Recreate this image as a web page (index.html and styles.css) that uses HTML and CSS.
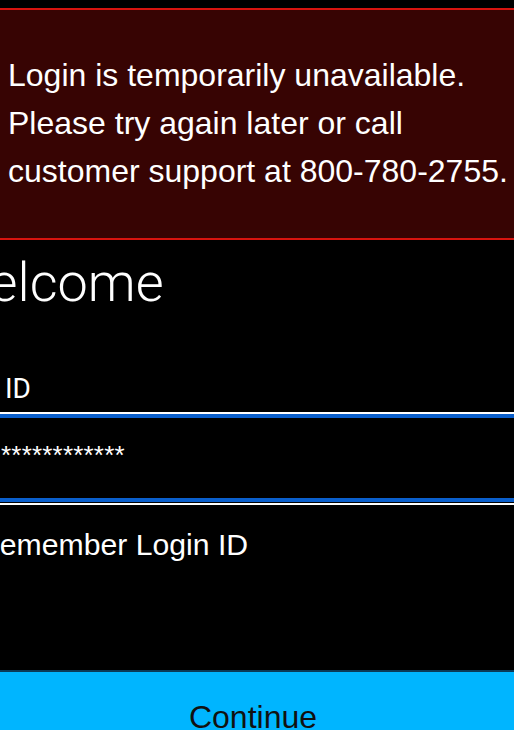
FILE: index.html
```html
<!DOCTYPE html>
<html lang="en">
<head>
<meta charset="utf-8">
<title>Login</title>
<link rel="stylesheet" href="styles.css">
</head>
<body>
<div class="alert">
  <p class="alert-text">Login is temporarily unavailable.<br>Please try again later or call<br>customer support at 800-780-2755.</p>
</div>
<main class="form">
  <h1 class="title">Welcome</h1>
  <div class="field-label">Login ID</div>
  <div class="password-box">
    <div class="password-inner"><span class="password-value">************</span></div>
  </div>
  <div class="remember">Remember Login ID</div>
</main>
<button class="continue" type="button">Continue</button>
</body>
</html>
```

FILE: styles.css
```css
html, body {
  margin: 0;
  padding: 0;
  background: #000;
  overflow: hidden;
  width: 514px;
  height: 730px;
}

body {
  font-family: "Liberation Sans", Arial, sans-serif;
  color: #fff;
}

.alert {
  margin-top: 8px;
  background: #370403;
  border-top: 2px solid #d8140f;
  border-bottom: 2px solid #d8140f;
  padding: 41px 0 43px 8px;
}

.alert-text {
  margin: 0;
  font-size: 32px;
  line-height: 48px;
  white-space: nowrap;
}

.form {
  display: flex;
  flex-direction: column;
}

.title {
  margin: 16px 0 0 -58px;
  font-family: Roboto, "Open Sans", sans-serif;
  font-weight: 300;
  font-size: 54px;
  line-height: 54px;
  white-space: nowrap;
}

.field-label {
  margin: 65px 0 0 -71px;
  font-family: Roboto, "Open Sans", sans-serif;
  font-weight: 400;
  font-size: 28px;
  line-height: 28px;
  height: 37px;
  white-space: nowrap;
}

.password-box {
  border-top: 2px solid #fff;
  border-bottom: 2px solid #fff;
  padding-bottom: 1px;
}

.password-inner {
  border-top: 4px solid #0a5fcc;
  border-bottom: 4px solid #0a5fcc;
  height: 80px;
  display: flex;
  align-items: center;
}

.password-value {
  font-family: "Liberation Sans", Arial, sans-serif;
  font-size: 26px;
  line-height: 30px;
  margin-left: 1px;
  letter-spacing: 0.2px;
  padding-bottom: 6px;
}

.remember {
  box-sizing: border-box;
  height: 165px;
  padding-top: 25px;
  margin-left: -22px;
  font-size: 30.2px;
  line-height: 30px;
  white-space: nowrap;
}

.continue {
  display: block;
  width: 514px;
  margin: 0;
  border: 0;
  border-top: 2px solid #0b3a58;
  background: #00b5ff;
  color: #111;
  font-family: "Liberation Sans", Arial, sans-serif;
  font-size: 32px;
  line-height: 40px;
  padding: 25px 8px 20px 0;
  text-align: center;
}
```
